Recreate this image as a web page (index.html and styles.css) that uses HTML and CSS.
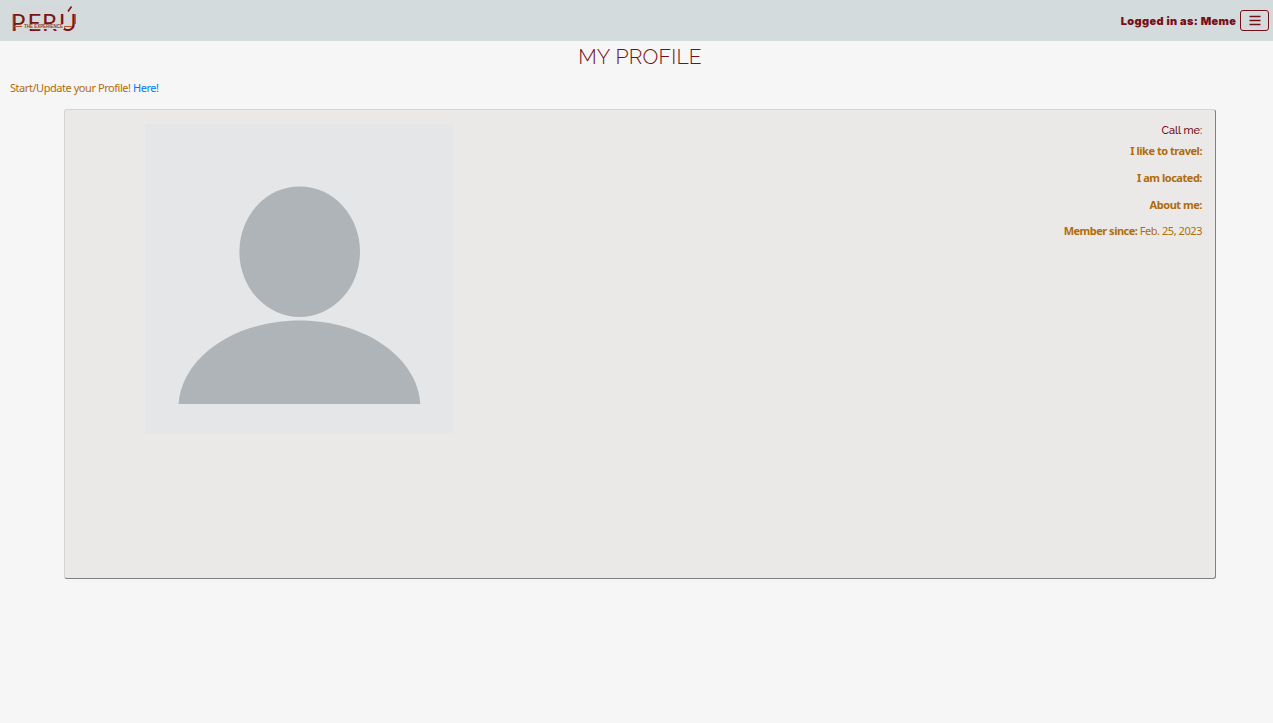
FILE: index.html
```html
<!DOCTYPE html>
<html lang="en">
<head>
<meta charset="utf-8">
<title>My Profile</title>
<link rel="stylesheet" href="styles.css">
</head>
<body>
<header class="navbar">
  <svg class="logo" width="66" height="30" viewBox="0 0 66 30" role="img" aria-label="Perú the experience">
    <rect width="66" height="30" fill="#d6d9da"/>
    <text class="logo-word" x="0 16.500 31 48" y="25.500">PERU</text>
    <path d="M57 6.500L60.500 1.500" stroke="#7b1515" stroke-width="1.6"/>
    <rect x="11" y="19" width="42" height="5" fill="#d6d9da"/>
    <path d="M2 21.500H11M53 21.500H61" stroke="#b5552f" stroke-width="1"/>
    <path d="M2.500 9V26M64 9V19" stroke="#984024" stroke-width="1.500"/>
    <text class="logo-tag" x="13" y="23.300" textLength="39" lengthAdjust="spacingAndGlyphs">THE EXPERIENCE</text>
  </svg>
  <div class="account">
    <span class="login">Logged in as: Meme</span>
    <button class="menu" aria-label="Menu">
      <svg width="12" height="12" viewBox="0 0 12 12"><path d="M.5 1.5H11.5M.5 5.5H11.5M.5 9.5H11.5" stroke="#751018" stroke-width="1.4"/></svg>
    </button>
  </div>
</header>
<main>
  <h1 class="title">MY PROFILE</h1>
  <p class="update">Start/Update your Profile! <a href="#">Here!</a></p>
  <section class="card">
    <svg class="avatar" width="308" height="309" viewBox="0 0 308 309">
      <rect width="308" height="309" fill="#e4e6e8"/>
      <ellipse cx="154.7" cy="127.7" rx="60.3" ry="65.3" fill="#aeb4b8"/>
      <path d="M33.500 280C37 233 90 196.500 154.700 196.500S272.300 233 275.300 280Z" fill="#aeb4b8"/>
    </svg>
    <div class="details">
      <h2 class="name">Call me:</h2>
      <p class="travel"><b>I like to travel:</b></p>
      <p class="located"><b>I am located:</b></p>
      <p class="about"><b>About me:</b></p>
      <p class="member"><b>Member since:</b> <span>Feb. 25, 2023</span></p>
    </div>
  </section>
</main>
</body>
</html>
```
FILE: styles.css
```css
* { box-sizing: border-box; }
body { margin: 0; background: #f6f6f6; color: #b16c0b; font: 11px/16px "Noto Sans", sans-serif; }
.navbar { height: 41px; padding: 0 4px 0 11px; display: flex; align-items: center; justify-content: space-between; background: #d4dbdd; }
.logo { display: block; margin-bottom: 2px; }
.logo-word { font: 400 24px Lato, sans-serif; fill: #7b1515; }
.logo-tag { font: 700 4.5px "Liberation Sans", sans-serif; fill: #94401f; }
.account { display: flex; align-items: center; gap: 4px; color: #751018; }
.login { margin-right: -.3px; font: 900 11px/16px Inter, sans-serif; letter-spacing: .34px; }
.menu { width: 29px; height: 21px; padding: 0; border: 1px solid #751018; border-radius: 3px; background: transparent; display: flex; align-items: center; justify-content: center; }
.title { margin: 4px 0 0 7px; text-align: center; color: #751018; font: 350 21px/24px Raleway, Montserrat, Inter, sans-serif; letter-spacing: .2px; }
.update { margin: 11px 0 0 10px; letter-spacing: -.45px; }
.update a { color: #007bff; text-decoration: none; }
.card { width: 1152px; height: 470px; margin: 13px 0 0 64px; padding: 14px 13px 0 80px; display: flex; justify-content: space-between; background: #eae9e7; border: 1px solid #d6d5d2; border-right-color: #808080; border-bottom-color: #808080; border-radius: 3px; }
.avatar { display: block; flex: none; }
.details { text-align: right; letter-spacing: -.47px; }
.details p { margin: 0 0 11px; }
.details .member { letter-spacing: -.5px; }
.details .member span { letter-spacing: -.45px; }
.details .name { margin: -1px 0 4px; color: #751018; font: 500 11px/16px Raleway, Montserrat, Inter, sans-serif; letter-spacing: -.1px; }
.details .about { margin-bottom: 10px; }
```
